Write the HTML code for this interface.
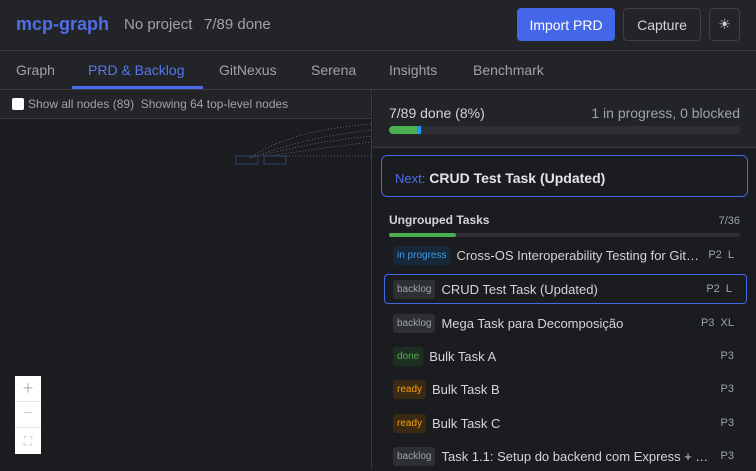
<!DOCTYPE html>
<html><head><style>
*{box-sizing:border-box;margin:0;padding:0}
body{width:756px;height:469px;overflow:hidden;background:#1b1c20;font-family:"Liberation Sans",Arial,sans-serif;color:#d4d4d8;position:relative}
.hdr{position:absolute;left:0;top:0;width:756px;height:51px;background:#232428;border-bottom:1px solid #3a3b40}
.logo{position:absolute;left:16px;top:14px;font-size:18px;font-weight:bold;color:#4f6fe8}
.sub{position:absolute;top:16px;font-size:15px;color:#a1a1aa}
.btn{position:absolute;top:8px;height:33px;border-radius:4px;font-size:14px;display:flex;align-items:center;justify-content:center}
.tabs{position:absolute;left:0;top:51px;width:756px;height:39px;background:#232428;border-bottom:1px solid #3a3b40}
.tab{position:absolute;top:11px;font-size:14px;color:#a1a1aa}
.left{position:absolute;left:0;top:90px;width:372px;height:379px;background:#1b1c20;border-right:1px solid #3a3b40}
.tool{height:29px;background:#232428;border-bottom:1px solid #3a3b40;font-size:12px;color:#a1a1aa;padding:7px 0 0 12px}
.cb{display:inline-block;width:12px;height:12px;background:#fff;border-radius:2px;vertical-align:-2px;margin-right:4px}
.right{position:absolute;left:373px;top:90px;width:383px;height:379px;background:#1b1c20}
.prog{height:58px;background:#232428;border-bottom:1px solid #3a3b40;position:relative}
.row{position:absolute;left:10px;width:365px;height:30px;display:flex;align-items:center;font-size:13px;color:#d4d4d8}
.t{white-space:nowrap;overflow:hidden;text-overflow:ellipsis}
.bd{font-size:10px;padding:4px 4px;border-radius:3px;margin-left:10px;margin-right:6px}
.bl{background:#2e2f33;color:#9ca3af}
.meta{position:absolute;right:14px;font-size:11px;color:#9ca3af}
</style></head><body>
<div class="hdr">
<div class="logo">mcp-graph</div>
<div class="sub" style="left:124px">No project</div>
<div class="sub" style="left:204px">7/89 done</div>
<div class="btn" style="left:517px;width:98px;background:#4466e8;color:#fff">Import PRD</div>
<div class="btn" style="left:623px;width:78px;border:1px solid #3f4046;color:#d4d4d8">Capture</div>
<div class="btn" style="left:709px;width:31px;border:1px solid #3f4046;color:#d4d4d8">☀</div>
</div>
<div class="tabs">
<div class="tab" style="left:16px">Graph</div>
<div class="tab" style="left:88px;color:#5478f0">PRD &amp; Backlog</div>
<div style="position:absolute;left:72px;top:35px;width:131px;height:3px;background:#4a6cf0"></div>
<div class="tab" style="left:219px">GitNexus</div>
<div class="tab" style="left:311px">Serena</div>
<div class="tab" style="left:389px">Insights</div>
<div class="tab" style="left:473px">Benchmark</div>
</div>
<div class="left">
<div class="tool"><span class="cb"></span>Show all nodes (89)&nbsp;&nbsp;Showing 64 top-level nodes</div>
<svg style="position:absolute;left:230px;top:30px" width="142" height="50">
<g stroke="#8a8a90" stroke-width="0.6" stroke-dasharray="1 2" fill="none">
<path d="M20 38 Q60 10 142 4"/><path d="M22 38 Q70 18 142 10"/><path d="M30 36 Q80 22 142 16"/><path d="M40 36 Q90 28 142 22"/><path d="M50 36 L142 36"/></g>
<rect x="6" y="36" width="22" height="8" fill="none" stroke="#3b5ea8" stroke-width="0.6"/>
<rect x="34" y="36" width="22" height="8" fill="none" stroke="#3b5ea8" stroke-width="0.6"/>
</svg>
<div style="position:absolute;left:15px;top:286px;width:26px;height:78px;background:#fff">
<div style="height:26px;border-bottom:1px solid #e5e5e5;text-align:center;color:#bbb;font-size:18px;line-height:24px">+</div>
<div style="height:26px;border-bottom:1px solid #e5e5e5;text-align:center;color:#ccc;font-size:16px;line-height:24px">−</div>
<div style="height:26px;text-align:center;color:#bbb;font-size:12px;line-height:26px">⛶</div>
</div>
</div>
<div class="right">
<div class="prog">
<div style="position:absolute;left:16px;top:15px;font-size:14px;color:#d4d4d8">7/89 done (8%)</div>
<div style="position:absolute;right:16px;top:15px;font-size:14px;color:#9ca3af">1 in progress, 0 blocked</div>
<div style="position:absolute;left:16px;top:36px;width:351px;height:8px;border-radius:4px;background:#2e2f34;overflow:hidden"><div style="width:28px;height:8px;background:#4caf50;float:left"></div><div style="width:4px;height:8px;background:#2196f3;float:left"></div></div>
</div>
<div style="position:absolute;left:8px;top:65px;width:367px;height:42px;border:1px solid #4466e8;border-radius:6px;padding:14px 0 0 13px;font-size:14px;font-weight:bold;color:#e4e4e7"><span style="color:#4f6fe8;font-weight:normal;font-size:13px">Next:</span> CRUD Test Task (Updated)</div>
<div style="position:absolute;left:16px;top:123px;font-size:12px;font-weight:bold;color:#d4d4d8">Ungrouped Tasks</div>
<div style="position:absolute;right:16px;top:125px;font-size:11px;color:#9ca3af">7/36</div>
<div style="position:absolute;left:16px;top:143px;width:351px;height:4px;border-radius:2px;background:#2e2f34"><div style="width:67px;height:4px;border-radius:2px;background:#4caf50"></div></div>
<div class="row" style="top:150px"><span class="bd" style="background:#16283a;color:#3b9be8">in progress</span><span class="t" style="max-width:246px">Cross-OS Interoperability Testing for GitNexus</span><span class="meta">P2&nbsp;&nbsp;L</span></div>
<div class="row" style="top:184px;left:11px;width:363px;border:1px solid #4466e8;border-radius:4px"><span class="bd bl" style="margin-left:8px">backlog</span>CRUD Test Task (Updated)<span class="meta">P2&nbsp;&nbsp;L</span></div>
<div class="row" style="top:218px"><span class="bd bl">backlog</span>Mega Task para Decomposição<span class="meta">P3&nbsp;&nbsp;XL</span></div>
<div class="row" style="top:251px"><span class="bd" style="background:#1d2e22;color:#4caf50">done</span>Bulk Task A<span class="meta">P3</span></div>
<div class="row" style="top:284px"><span class="bd" style="background:#3a2a14;color:#f59e0b">ready</span>Bulk Task B<span class="meta">P3</span></div>
<div class="row" style="top:318px"><span class="bd" style="background:#3a2a14;color:#f59e0b">ready</span>Bulk Task C<span class="meta">P3</span></div>
<div class="row" style="top:351px"><span class="bd bl">backlog</span><span class="t" style="max-width:268px">Task 1.1: Setup do backend com Express + TypeScript</span><span class="meta">P3</span></div>
</div>
</body></html>
